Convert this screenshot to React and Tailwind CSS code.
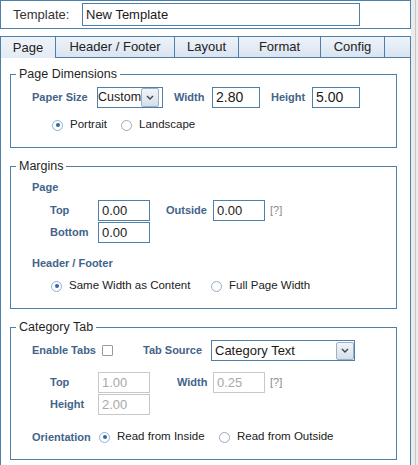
import React from 'react';

const BLUE = 'border-[#4d7fab]';

const Label = ({ children, className = '' }) => (
    <span className={`text-[11px] font-bold text-[#42638a] whitespace-nowrap shrink-0 ${className}`}>{children}</span>
);

const Field = ({ value, disabled, className = '' }) => (
    <div
        className={`flex items-center h-[21px] border pl-[3px] text-[13px] shrink-0 ${disabled ? 'border-[#c8c8c8] text-[#a8a8a8]' : `${BLUE} text-[#1a1a1a]`} ${className}`}
    >
        {value}
    </div>
);

const Chevron = () => (
    <svg width="8" height="5" viewBox="0 0 8 5">
        <path d="M1 1 L4 4 L7 1" fill="none" stroke="#444" strokeWidth="1.4" />
    </svg>
);

const Select = ({ value, className = '', btnClass = '', textClass = '' }) => (
    <div className={`flex items-center h-[21px] border ${BLUE} bg-white shrink-0 ${className}`}>
        <span className={`flex-1 overflow-hidden whitespace-nowrap text-[#1a1a1a] ${textClass}`}>{value}</span>
        <span className={`flex items-center justify-center w-[18px] border border-[#9cb0c6] rounded-[2px] bg-gradient-to-b from-[#f1f4f8] to-[#d5dfea] ${btnClass}`}>
            <Chevron />
        </span>
    </div>
);

const Radio = ({ checked, label, className = '' }) => (
    <span className={`flex items-center shrink-0 ${className}`}>
        <span className={`flex items-center justify-center w-[11px] h-[11px] rounded-full border bg-white ${checked ? 'border-[#8fb0d2]' : 'border-[#9aabbd]'}`}>
            {checked && <span className="w-[4px] h-[4px] rounded-full bg-[#2f67a3]" />}
        </span>
        <span className="ml-[7px] text-[11.5px] text-[#222] whitespace-nowrap">{label}</span>
    </span>
);

const Help = () => <span className="ml-[5px] text-[11px] text-[#888]">[?]</span>;

const Section = ({ title, children, className = '' }) => (
    <fieldset className={`ml-[9px] w-[387px] border ${BLUE} pb-[14px] ${className}`}>
        <legend className="ml-[5px] px-[3px] text-[12.5px] leading-[16px] text-[#1f1f1f]">{title}</legend>
        {children}
    </fieldset>
);

const tabs = [
    { name: 'Page', w: 'w-[56px] border-l', active: true },
    { name: 'Header / Footer', w: 'w-[119px]' },
    { name: 'Layout', w: 'w-[64px]' },
    { name: 'Format', w: 'w-[82px]' },
    { name: 'Config', w: 'w-[64px]' },
    { name: '', w: 'w-[26px]' },
];

export default function App() {
    return (
        <div className="flex w-[418px] h-[465px] bg-white overflow-hidden font-['Liberation_Sans',Arial,sans-serif]">
            <div className="flex flex-col w-[411px]">
                {/* Template name */}
                <div className={`flex items-center h-[29px] border ${BLUE} pl-[12px]`}>
                    <span className="w-[69px] text-[13px] text-[#333]">Template:</span>
                    <div className={`flex items-center w-[278px] h-[23px] border ${BLUE} pl-[3px] text-[13px] text-[#1a1a1a]`}>
                        New Template
                    </div>
                </div>

                {/* Tabs */}
                <div className="flex h-[22px] mt-[7px]">
                    {tabs.map((t, i) => (
                        <div
                            key={i}
                            className={`flex items-center justify-center border-t border-r ${BLUE} text-[13px] text-[#222] ${t.w} ${
                                t.active ? 'bg-gradient-to-b from-[#eef3f8] to-[#e4ebf3]' : 'border-b bg-gradient-to-b from-[#eef3f9] to-[#dae4ef]'
                            }`}
                        >
                            {t.name}
                        </div>
                    ))}
                </div>

                {/* Panel */}
                <div className={`flex-1 border-l border-r ${BLUE} pt-[8px]`}>
                    <Section title="Page Dimensions">
                        <div className="flex items-center h-[21px] mt-[5px] pl-[21px]">
                            <Label className="w-[65px]">Paper Size</Label>
                            <Select value="Custom" className="w-[66px]" textClass="text-[12.5px]" btnClass="h-[19px] mr-[3px]" />
                            <Label className="ml-[11px] w-[38px]">Width</Label>
                            <Field value="2.80" className="w-[48px] text-[14px]" />
                            <Label className="ml-[11px] w-[41px]">Height</Label>
                            <Field value="5.00" className="w-[48px] text-[14px]" />
                        </div>
                        <div className="flex items-center h-[16px] mt-[9px] pl-[41px]">
                            <Radio checked label="Portrait" className="w-[69px]" />
                            <Radio label="Landscape" />
                        </div>
                    </Section>

                    <Section title="Margins" className="mt-[10px]">
                        <div className="flex items-center h-[14px] mt-[6px] pl-[21px]">
                            <Label>Page</Label>
                        </div>
                        <div className="flex items-center h-[21px] mt-[6px] pl-[39px]">
                            <Label className="w-[48px]">Top</Label>
                            <Field value="0.00" className="w-[52px]" />
                            <Label className="ml-[16px] w-[47px]">Outside</Label>
                            <Field value="0.00" className="w-[52px]" />
                            <Help />
                        </div>
                        <div className="flex items-center h-[21px] mt-[1px] pl-[39px]">
                            <Label className="w-[48px]">Bottom</Label>
                            <Field value="0.00" className="w-[52px]" />
                        </div>
                        <div className="flex items-center h-[14px] mt-[13px] pl-[21px]">
                            <Label>Header / Footer</Label>
                        </div>
                        <div className="flex items-center h-[16px] mt-[8px] pl-[40px]">
                            <Radio checked label="Same Width as Content" className="w-[160px]" />
                            <Radio label="Full Page Width" />
                        </div>
                    </Section>

                    <Section title="Category Tab" className="mt-[10px]">
                        <div className="flex items-center h-[21px] mt-[5px] pl-[21px]">
                            <Label className="w-[70px]">Enable Tabs</Label>
                            <span className="w-[11px] h-[11px] border border-[#9a9a9a] rounded-[1px] bg-white shrink-0" />
                            <Label className="ml-[30px] w-[68px]">Tab Source</Label>
                            <Select value="Category Text" className="w-[144px]" textClass="pl-[3px] text-[13px]" btnClass="h-[18px]" />
                        </div>
                        <div className="flex items-center h-[21px] mt-[11px] pl-[39px]">
                            <Label className="w-[48px]">Top</Label>
                            <Field value="1.00" disabled className="w-[52px]" />
                            <Label className="ml-[27px] w-[36px]">Width</Label>
                            <Field value="0.25" disabled className="w-[52px]" />
                            <Help />
                        </div>
                        <div className="flex items-center h-[21px] mt-[1px] pl-[39px]">
                            <Label className="w-[48px]">Height</Label>
                            <Field value="2.00" disabled className="w-[52px]" />
                        </div>
                        <div className="flex items-center h-[16px] mt-[14px] pl-[21px]">
                            <Label className="w-[67px]">Orientation</Label>
                            <Radio checked label="Read from Inside" className="w-[120px]" />
                            <Radio label="Read from Outside" />
                        </div>
                    </Section>
                </div>
            </div>

            {/* scroll gutter */}
            <div className="flex w-[7px] bg-[#ebebeb]">
                <div className="ml-[4px] w-[1px] bg-[#c6c6c6]" />
            </div>
        </div>
    );
}
